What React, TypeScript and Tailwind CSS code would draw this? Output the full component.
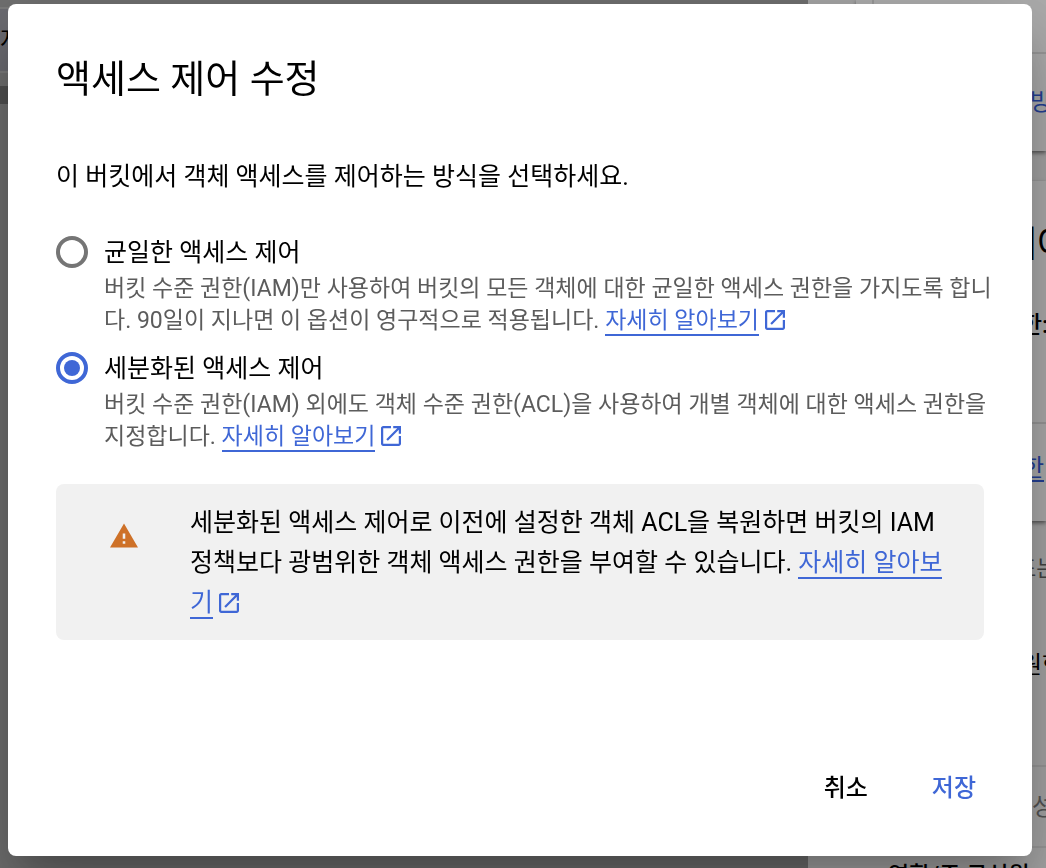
import { useState, type ReactNode } from "react";

function ExternalIcon() {
  return (
    <svg
      aria-hidden="true"
      viewBox="0 0 18 18"
      className="ml-1.5 inline-block size-5 align-[-2px] fill-[#3f67d6]"
    >
      <path d="M16 16H2V2h7V0H2C.89 0 0 .9 0 2v14c0 1.1.89 2 2 2h14c1.1 0 2-.9 2-2V9h-2v7zM11 0v2h3.59l-9.83 9.83 1.41 1.41L16 3.41V7h2V0h-7z" />
    </svg>
  );
}

function LearnMore() {
  return (
    <a href="#learn-more" className="text-[#3f67d6]">
      <span className="border-b-2 border-[#3f67d6]">자세히 알아보기</span>
      <ExternalIcon />
    </a>
  );
}

type OptionProps = {
  id: string;
  title: string;
  checked: boolean;
  onSelect: () => void;
  children: ReactNode;
};

function Option({ id, title, checked, onSelect, children }: OptionProps) {
  return (
    <div className="-mr-2 flex gap-4">
      <input
        id={id}
        type="radio"
        name="access-control"
        checked={checked}
        onChange={onSelect}
        aria-describedby={`${id}-description`}
        className="grid size-8 shrink-0 appearance-none place-items-center rounded-full border-4 border-[#757575] before:size-4 before:rounded-full checked:border-[#3f67d6] checked:before:bg-[#3f67d6]"
      />
      <div className="min-w-0 flex-1 pt-px">
        <label htmlFor={id} className="block pb-1 text-[25px] leading-8">
          {title}
        </label>
        <p id={`${id}-description`} className="text-[23px] leading-8 text-[#5c5c5c]">
          {children}
        </p>
      </div>
    </div>
  );
}

function Backdrop() {
  return (
    <div aria-hidden="true" className="fixed inset-0 flex overflow-hidden whitespace-nowrap bg-[#707070]">
      <div className="flex-1">
        <div className="h-[7px]" />
        <div className="flex h-[66px] items-center border-y-2 border-[#7c7c7c] bg-[#6c6c72] text-2xl">저장</div>
        <div className="h-[13px]" />
        <div className="h-[18px] bg-[#505050]" />
      </div>
      <div className="w-[238px] shrink-0 bg-[#a6a6a6] pl-12">
        <div className="h-[151px] bg-[#adadad] shadow-[0_2px_4px_rgba(0,0,0,0.5)]">
          <div className="ml-4 h-[54px] border-b-2 border-l-2 border-[#999999]" />
          <div className="pt-7 pl-[174px] text-2xl leading-10 text-[#244096]">방지</div>
        </div>
        <div className="mt-[30px] h-[340px] bg-[#adadad] shadow-[0_2px_4px_rgba(0,0,0,0.5)]">
          <div className="h-[243px] border-b-2 border-[#999999] pt-10">
            <div className="pl-[148px] text-4xl leading-[48px]">제어</div>
            <div className="pt-9 pl-[164px] text-2xl leading-10 font-medium">한: 세분화</div>
          </div>
          <div className="pt-8 pl-[166px] text-2xl leading-6 text-[#244096]">
            <span className="inline-block border-b-2">한</span>
          </div>
        </div>
        <div className="pt-7 pl-[160px] text-[22px] leading-10 text-[#444444]">또는</div>
        <div className="h-[178px] border-b-2 border-[#999999] pt-14 pl-[164px] text-2xl leading-10">원한</div>
        <div className="h-[81px] border-b-2 border-[#999999] pt-5 pl-[176px] text-2xl leading-10 text-[#555555]">성</div>
        <div className="pt-2 pl-8 text-[23px] leading-10 font-medium">역할/주 구성원</div>
      </div>
    </div>
  );
}

export default function App() {
  const [mode, setMode] = useState("fine");

  return (
    <div className="font-[Roboto,'Noto_Sans_CJK_KR',sans-serif] text-black" lang="ko">
      <Backdrop />
      <div className="relative flex min-h-screen pt-1 pr-3.5 pb-3 pl-2">
        <form
          role="dialog"
          aria-modal="true"
          aria-labelledby="dialog-title"
          onSubmit={(event) => event.preventDefault()}
          className="flex flex-1 flex-col rounded-lg bg-white px-12 pt-12 pb-10 shadow-[0_22px_30px_-14px_rgba(0,0,0,0.2),0_48px_76px_6px_rgba(0,0,0,0.14),0_18px_92px_16px_rgba(0,0,0,0.12)]"
        >
          <h1 id="dialog-title" className="text-[38px] leading-[54px] font-normal">
            액세스 제어 수정
          </h1>
          <p className="mt-[51px] text-[25px] leading-10">
            이 버킷에서 객체 액세스를 제어하는 방식을 선택하세요.
          </p>

          <div className="mt-[39px] flex flex-col gap-[15px]">
            <Option id="uniform" title="균일한 액세스 제어" checked={mode === "uniform"} onSelect={() => setMode("uniform")}>
              버킷 수준 권한(IAM)만 사용하여 버킷의 모든 객체에 대한 균일한 액세스 권한을 가지도록 합니다. 90일이 지나면 이 옵션이 영구적으로 적용됩니다. <LearnMore />
            </Option>
            <Option id="fine" title="세분화된 액세스 제어" checked={mode === "fine"} onSelect={() => setMode("fine")}>
              버킷 수준 권한(IAM) 외에도 객체 수준 권한(ACL)을 사용하여 개별 객체에 대한 액세스 권한을 지정합니다. <LearnMore />
            </Option>
          </div>

          <div className="mt-[31px] flex rounded-lg bg-[#f1f1f1] pt-[19px] pr-10 pb-[17px] pl-[54px]">
            <svg aria-hidden="true" viewBox="1 2 22 19" className="mt-5 mr-[52px] h-[25px] w-7 shrink-0 fill-[#ce7128]">
              <path d="M1 21h22L12 2 1 21zm12-3h-2v-2h2v2zm0-4h-2v-4h2v4z" />
            </svg>
            <p className="text-[25px] leading-10">
              세분화된 액세스 제어로 이전에 설정한 객체 ACL을 복원하면 버킷의 IAM 정책보다 광범위한 객체 액세스 권한을 부여할 수 있습니다. <LearnMore />
            </p>
          </div>

          <div className="mt-auto flex justify-end gap-8">
            <button type="button" className="h-14 px-4 text-2xl font-medium">취소</button>
            <button type="submit" className="-mr-2 h-14 px-4 text-2xl font-medium text-[#3f67d6]">저장</button>
          </div>
        </form>
      </div>
    </div>
  );
}
